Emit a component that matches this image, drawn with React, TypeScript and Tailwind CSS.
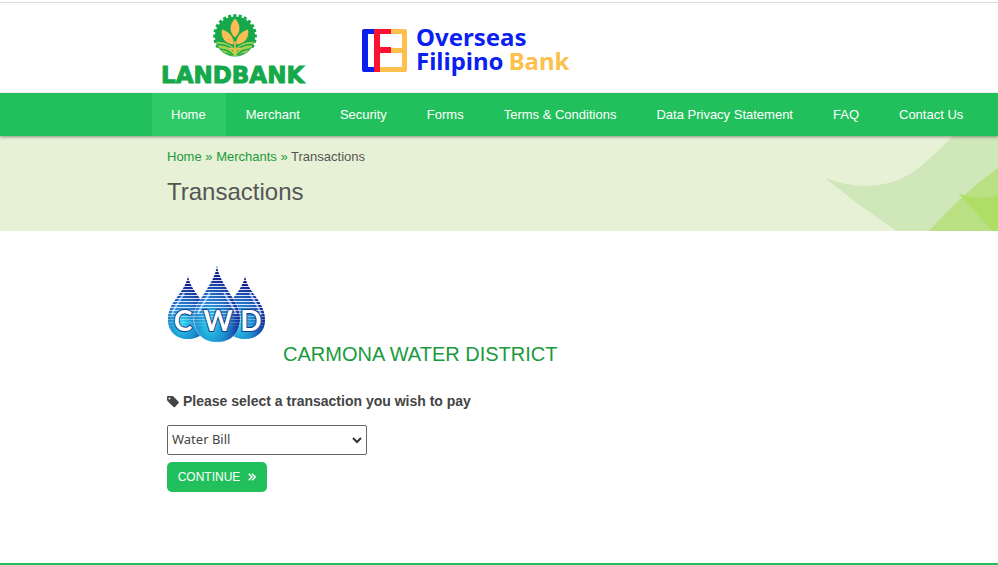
import React from "react";

const navItems = [
  "Home",
  "Merchant",
  "Security",
  "Forms",
  "Terms & Conditions",
  "Data Privacy Statement",
  "FAQ",
  "Contact Us",
];

function LandbankLogo() {
  const teeth = Array.from({ length: 17 }, (_, i) => -120 + i * 15);
  return (
    <svg width="150" height="76" viewBox="0 0 150 76" role="img" aria-label="LANDBANK">
      <g fill="#15a94c">
        {teeth.map((a) => (
          <rect key={a} x="73.3" y="1.2" width="3.2" height="4" transform={`rotate(${a} 75 23)`} />
        ))}
        <circle cx="75" cy="23.500" r="20" />
      </g>
      <clipPath id="field">
        <circle cx="75" cy="23.500" r="19.500" />
      </clipPath>
      <g clipPath="url(#field)" fill="none">
        <path d="M53 29 Q66 27 75 36 Q84 27 97 29 V46 H53Z" fill="#a5cf4c" />
        <g stroke="#15a94c" strokeWidth="1.5">
          <path d="M54 32 Q67 30 74 38" />
          <path d="M96 32 Q83 30 76 38" />
          <path d="M54 37 Q66 34 73 42" />
          <path d="M96 37 Q84 34 77 42" />
          <path d="M58 42 Q68 38 73 45" />
          <path d="M92 42 Q82 38 77 45" />
        </g>
      </g>
      <g fill="#fdbd54" stroke="#15a94c" strokeWidth="0.8">
        <path d="M75 5 C68.500 12 68.500 19 75 25 C81.500 19 81.500 12 75 5Z" />
        <path d="M61.500 16 C60 25 65 31 74 32 C75 24 69 18 61.500 16Z" />
        <path d="M88.500 16 C90 25 85 31 76 32 C75 24 81 18 88.500 16Z" />
      </g>
      <path d="M75 28V41 M69 35.500Q74 35 75 39Q76 35 81 35.500" fill="none" stroke="#fdbd54" strokeWidth="1.500" />
      <text
        x="1"
        y="70"
        fontFamily="DejaVu Sans, sans-serif"
        fontSize="23"
        fontWeight="700"
        fill="#15a94c"
        stroke="#15a94c"
        strokeWidth="1"
      >
        LANDBANK
      </text>
    </svg>
  );
}

function OverseasLogo() {
  return (
    <svg className="overflow-visible" width="216" height="54" viewBox="0 0 216 54" role="img" aria-label="Overseas Filipino Bank">
      <path d="M3 4H13V9H7V42H13V47H3Q1 47 1 45V6Q1 4 3 4Z" fill="#0a1ff0" />
      <path d="M30 4H44Q46 4 46 6V45Q46 47 44 47H19V42H41V28H30V23H41V9H30Z" fill="#fdc04c" />
      <path d="M13 4H30V9H19V22H30V28H19V47H13Z" fill="#fb1233" />
      <g fontFamily="Noto Sans, sans-serif" fontSize="24" fontWeight="700">
        <text x="55" y="21" fill="#0a1ff0">Overseas</text>
        <text x="55" y="45" fill="#0a1ff0">
          Filipino<tspan dx="5" fill="#fdc04c">Bank</tspan>
        </text>
      </g>
    </svg>
  );
}

function WaterDistrictLogo() {
  return (
    <svg width="100" height="80" viewBox="0 0 100 80" role="img" aria-label="CWD">
      <defs>
        <linearGradient id="dropShade" x1="0" y1="0" x2="0" y2="1">
          <stop offset="0" stopColor="#15207e" />
          <stop offset="0.5" stopColor="#3f6fcf" />
          <stop offset="0.8" stopColor="#1cb4dd" />
          <stop offset="1" stopColor="#28a5cf" />
        </linearGradient>
        <radialGradient id="dropGlow" cx="0.35" cy="0.75" r="0.62">
          <stop offset="0" stopColor="#2ee0f2" />
          <stop offset="0.5" stopColor="#1b86cf" stopOpacity="0.6" />
          <stop offset="1" stopColor="#121c92" stopOpacity="0.85" />
        </radialGradient>
        <pattern id="scan" width="4" height="3" patternUnits="userSpaceOnUse">
          <rect width="4" height="1" fill="#ffffff" fillOpacity="0.85" />
        </pattern>
        <linearGradient id="scanFade" x1="0" y1="0" x2="0" y2="1">
          <stop offset="0.5" stopColor="#fff" />
          <stop offset="0.8" stopColor="#000" />
        </linearGradient>
        <mask id="scanMask">
          <rect width="100" height="80" fill="url(#scanFade)" />
        </mask>
        <path id="sideDrop" d="M21 11 C19 27 1 36 1 55 C1 67 10 74 21 74 C32 74 41 67 41 55 C41 36 23 27 21 11Z" />
        <path id="midDrop" d="M50 1 C47 21 27 36 27 53 C27 69 37 77 50 77 C63 77 73 69 73 53 C73 36 53 21 50 1Z" />
      </defs>
      <use href="#sideDrop" fill="url(#dropShade)" />
      <use href="#sideDrop" fill="url(#dropGlow)" />
      <use href="#sideDrop" x="57" fill="url(#dropShade)" />
      <use href="#sideDrop" x="57" fill="url(#dropGlow)" />
      <use href="#midDrop" fill="url(#dropShade)" stroke="#d9efff" strokeWidth="0.8" />
      <use href="#midDrop" fill="url(#dropGlow)" />
      <path
        d="M17 28C13 36 7 42 5 50M43 27C39 36 33 42 31 49M83 28C87 36 92 42 94 50M57 27C61 36 67 42 69 49"
        fill="none"
        stroke="#c9e8ff"
        strokeWidth="2"
        strokeOpacity="0.7"
      />
      <rect width="100" height="80" fill="url(#scan)" mask="url(#scanMask)" />
      <g
        fontFamily="Lato, sans-serif"
        fontSize="28"
        fontWeight="700"
        fill="#ffffff"
        stroke="#17408f"
        strokeWidth="2"
        paintOrder="stroke"
        textAnchor="middle"
      >
        <text x="16" y="66">C</text>
        <text x="51" y="66">W</text>
        <text x="84" y="66">D</text>
      </g>
    </svg>
  );
}

function BannerLeaves() {
  return (
    <svg className="absolute right-0 top-0" width="174" height="95" viewBox="0 0 174 95" aria-hidden="true">
      <path d="M1 42 Q50 60 88 37 Q106 24 129 0 H174 V95 H73 Q42 75 1 42Z" fill="#cfe7b9" />
      <path d="M174 32 Q140 56 105 95 H174Z" fill="#b9e082" />
      <path d="M134 57 Q154 66 174 59 V95 H169 Q151 76 134 57Z" fill="#afde66" />
    </svg>
  );
}

function TagIcon() {
  return (
    <svg width="12" height="13" viewBox="0 0 12 13" aria-hidden="true">
      <path
        fillRule="evenodd"
        d="M0 2Q0 1 1 1H5Q6 1 7 2L11.500 6.700Q12.200 7.500 11.500 8.300L8 12Q7.200 12.600 6.500 12L1 6.500Q0 5.500 0 4.800ZM2.500 2.400A1 1 0 1 0 2.500 4.400A1 1 0 1 0 2.500 2.400Z"
        fill="#444444"
      />
    </svg>
  );
}

export default function App() {
  return (
    <div className="overflow-hidden bg-white font-['Liberation_Sans',Arial,sans-serif] text-[13px] text-[#555555]">
      <header className="h-[93px] pt-0.5">
        <div className="h-px bg-[#dcdcdc]" />
        <div className="flex items-start gap-[51px] pl-40 pt-2.5">
          <LandbankLogo />
          <div className="pt-3">
            <OverseasLogo />
          </div>
        </div>
      </header>

      <nav className="relative z-10 bg-[#22c05c] pl-[152px] shadow-[0_1px_3px_rgba(0,0,0,0.4)]">
        <ul className="flex">
          {navItems.map((item, i) => (
            <li key={item}>
              <a
                href="#"
                className={
                  i === 0
                    ? "block whitespace-nowrap bg-[#2fca68] pr-5 pl-[19px] text-[13px] leading-[43px] text-white"
                    : "block whitespace-nowrap px-5 text-[13px] leading-[43px] text-white"
                }
              >
                {item}
              </a>
            </li>
          ))}
        </ul>
      </nav>

      <section className="relative h-[95px] bg-[#e7f1d6] pl-[167px] pt-3">
        <BannerLeaves />
        <div className="relative leading-[18px]">
          <a href="#" className="text-[#1a9a3c]">Home</a>
          <span className="text-[#1a9a3c]"> » </span>
          <a href="#" className="text-[#1a9a3c]">Merchants</a>
          <span className="text-[#1a9a3c]"> » </span>
          <span>Transactions</span>
        </div>
        <h1 className="relative mt-2.5 text-2xl leading-8">Transactions</h1>
      </section>

      <main className="h-[332px] pl-[167px] pt-[34px]">
        <div className="flex items-end gap-4">
          <div className="pb-5">
            <WaterDistrictLogo />
          </div>
          <h2 className="text-xl leading-[22px] text-[#1a9a3c]">CARMONA WATER DISTRICT</h2>
        </div>
        <form onSubmit={(e) => e.preventDefault()}>
          <label htmlFor="transaction" className="mt-[26px] flex items-center gap-1 text-sm leading-5 font-bold text-[#444444]">
            <TagIcon />
            Please select a transaction you wish to pay
          </label>
          <div className="relative mt-3.5 h-[30px] w-[200px]">
            <select
              id="transaction"
              className="h-full w-full appearance-none rounded-xs border border-[#666666] bg-white px-1 font-['Noto_Sans',sans-serif] text-[13px] text-[#444444]"
            >
              <option>Water Bill</option>
            </select>
            <svg className="pointer-events-none absolute right-[5px] top-[11px]" width="10" height="8" viewBox="0 0 10 8" aria-hidden="true">
              <path d="M1 2L5 6L9 2" fill="none" stroke="#333333" strokeWidth="2" />
            </svg>
          </div>
          <button type="submit" className="mt-[7px] flex h-[30px] w-[100px] items-center justify-center gap-2 rounded-[5px] bg-[#22c05c] text-xs text-white">
            CONTINUE
            <svg width="8" height="8" viewBox="0 0 8 8" aria-hidden="true">
              <path d="M0.700 0.700L4 4L0.700 7.300M4 0.700L7.300 4L4 7.300" fill="none" stroke="#ffffff" strokeWidth="1.500" />
            </svg>
          </button>
        </form>
      </main>
      <footer className="h-0.5 bg-[#22c05c]" />
    </div>
  );
}
